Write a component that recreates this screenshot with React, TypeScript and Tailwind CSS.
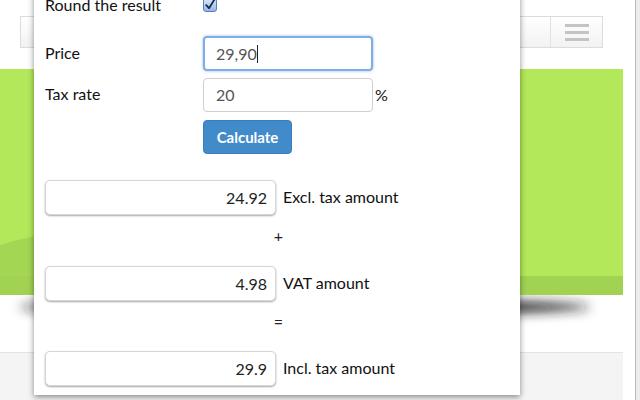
import React from 'react'

const font = { fontFamily: 'Lato, "Open Sans", sans-serif' }

function Checkbox() {
  return (
    <svg width="14" height="14" viewBox="0 0 14 14">
      <defs>
        <linearGradient id="cb" x1="0" y1="0" x2="0" y2="1">
          <stop offset="0" stopColor="#dbe9fb" />
          <stop offset="1" stopColor="#8fb6ec" />
        </linearGradient>
      </defs>
      <rect x="0.5" y="0.5" width="13" height="13" rx="2.5" fill="url(#cb)" stroke="#5a7fb8" />
      <path d="M3.2 7.2 L6 10.2 L11.6 1.2" fill="none" stroke="#1d2a44" strokeWidth="1.8" strokeLinecap="round" strokeLinejoin="round" />
    </svg>
  )
}

function ResultRow({ value, label }: { value: string; label: string }) {
  return (
    <div className="flex items-center h-[35px]">
      <div className="w-[231px] h-[35px] rounded-[5px] border border-[#d6d6d6] bg-white shadow-[0_1px_2px_rgba(0,0,0,0.35)] flex items-center justify-end pr-[8px] text-[16px] text-[#222]">
        {value}
      </div>
      <span className="ml-[7px] text-[16px] text-[#111] -mt-[2px]">{label}</span>
    </div>
  )
}

export default function App() {
  return (
    <div className="relative w-[640px] h-[400px] overflow-hidden bg-white" style={font}>
      {/* page behind the popup */}
      <div className="flex h-full">
        <div className="w-[623px] flex flex-col">
          <div className="h-[69px] pt-[16px] pl-[20px] pr-[20px] bg-white">
            <div className="h-[32px] flex border border-[#dcdcdc] bg-gradient-to-b from-white to-[#f2f2f2]">
              <div className="flex-1" />
              <div className="w-[52px] border-l border-[#e2e2e2] flex flex-col items-center justify-center gap-[4px]">
                <div className="w-[24px] h-[3px] bg-[#c4c4c4]" />
                <div className="w-[24px] h-[3px] bg-[#c4c4c4]" />
                <div className="w-[24px] h-[3px] bg-[#c4c4c4]" />
              </div>
            </div>
          </div>
          <div className="h-[226px] bg-[#b3e85a] flex flex-col">
            <svg width="623" height="207" viewBox="0 0 623 207" className="block">
              <path d="M0 176 Q20 170 40 166 L40 207 L0 207 Z" fill="#a3d653" />
            </svg>
            <div className="h-[19px] bg-[#a2d252]" />
          </div>
          <div className="h-[57px] bg-white">
            <svg width="623" height="57" viewBox="0 0 623 57" className="block">
              <defs>
                <filter id="sh" x="-20%" y="-200%" width="140%" height="500%">
                  <feGaussianBlur stdDeviation="6" />
                </filter>
              </defs>
              <ellipse cx="305" cy="12" rx="285" ry="8" fill="#1a1a1a" filter="url(#sh)" />
            </svg>
          </div>
          <div className="flex-1 bg-[#f4f4f4] border-t border-[#e4e4e4]" />
        </div>
        <div className="w-[13px] bg-white border-r border-[#b9b9b9]" />
        <div className="flex-1 bg-[#ececec]" />
      </div>

      {/* popup */}
      <div className="absolute left-[34px] top-[-21px] w-[486px] h-[416px] bg-white shadow-[0_2px_6px_rgba(0,0,0,0.45)] pl-[11px]">
        <div className="flex items-center h-[24px] mt-[14px]">
          <span className="w-[158px] text-[16px] text-[#111]">Round the result</span>
          <Checkbox />
        </div>
        <div className="flex items-center mt-[19px]">
          <span className="w-[158px] text-[16px] text-[#111] -mt-[2px]">Price</span>
          <div className="w-[170px] h-[35px] rounded-[4px] border-2 border-[#7faee6] shadow-[0_0_3px_rgba(82,140,220,0.6)] flex items-center pl-[11px] text-[16px] text-[#555]">
            29,90<span className="w-px h-[18px] bg-[#222]" />
          </div>
        </div>
        <div className="flex items-center mt-[7px]">
          <span className="w-[158px] text-[16px] text-[#111] -mt-[2px]">Tax rate</span>
          <div className="w-[170px] h-[34px] rounded-[4px] border border-[#cfcfcf] flex items-center pl-[12px] text-[16px] text-[#555]">
            20
          </div>
          <span className="ml-[2px] text-[16px] text-[#111]">%</span>
        </div>
        <div className="pl-[158px] mt-[8px]">
          <div className="w-[89px] h-[34px] rounded-[4px] bg-[#428bca] border border-[#3a7dbf] flex items-center justify-center text-white font-bold text-[15px]">
            Calculate
          </div>
        </div>
        <div className="mt-[26px]">
          <ResultRow value="24.92" label="Excl. tax amount" />
        </div>
        <div className="h-[51px] w-[231px] flex items-center justify-end">
          <span className="text-[16px] text-[#222] -mr-[7px] -mt-[10px]">+</span>
        </div>
        <ResultRow value="4.98" label="VAT amount" />
        <div className="h-[50px] w-[231px] flex items-center justify-end">
          <span className="text-[16px] text-[#222] -mr-[7px] -mt-[8px]">=</span>
        </div>
        <ResultRow value="29.9" label="Incl. tax amount" />
      </div>
    </div>
  )
}
